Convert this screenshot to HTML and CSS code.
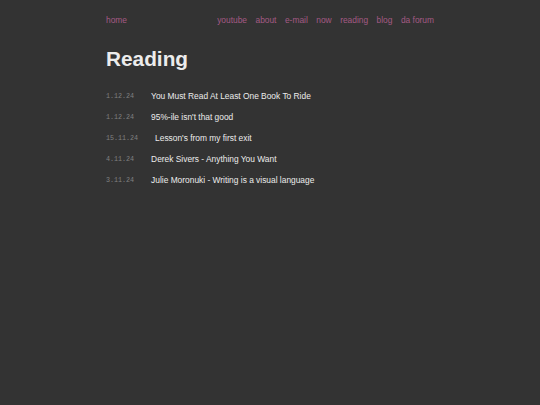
FILE: index.html
```html
<!DOCTYPE html>
<html>
<head>
<meta charset="utf-8">
<link rel="stylesheet" href="styles.css">
</head>
<body>
<div class="page">
  <nav class="nav">
    <a href="#" class="home">home</a>
    <div class="links">
      <a href="#">youtube</a>
      <a href="#">about</a>
      <a href="#">e-mail</a>
      <a href="#">now</a>
      <a href="#">reading</a>
      <a href="#">blog</a>
      <a href="#">da forum</a>
    </div>
  </nav>
  <h1 class="title">Reading</h1>
  <ul class="list">
    <li class="item"><span class="date">1.12.24</span><a href="#" class="post">You Must Read At Least One Book To Ride</a></li>
    <li class="item"><span class="date">1.12.24</span><a href="#" class="post">95%-ile isn't that good</a></li>
    <li class="item"><span class="date">15.11.24</span><a href="#" class="post">Lesson's from my first exit</a></li>
    <li class="item"><span class="date">4.11.24</span><a href="#" class="post">Derek Sivers - Anything You Want</a></li>
    <li class="item"><span class="date">3.11.24</span><a href="#" class="post">Julie Moronuki - Writing is a visual language</a></li>
  </ul>
</div>
</body>
</html>
```
FILE: styles.css
```css
html, body {
  margin: 0;
  padding: 0;
  background: #333333;
  height: 100%;
}
body {
  font-family: "Liberation Sans", Arial, sans-serif;
  color: #e6e6e6;
}
.page {
  width: 328px;
  margin: 0 auto;
  padding-top: 14px;
}
a {
  text-decoration: none;
}
.nav {
  display: flex;
  justify-content: space-between;
  font-size: 8.4px;
  line-height: 12px;
}
.nav a {
  color: #a45a84;
}
.links {
  display: flex;
  gap: 8.5px;
}
.title {
  font-size: 20.8px;
  font-weight: bold;
  color: #ececec;
  margin: 20px 0 0 0;
  line-height: 26px;
}
.list {
  list-style: none;
  margin: 18px 0 0 0;
  padding: 0;
}
.item {
  font-size: 8.4px;
  line-height: 12px;
  height: 21px;
}
.date {
  font-family: "Liberation Mono", "Courier New", monospace;
  font-size: 6.7px;
  color: #808080;
  margin-right: 17px;
  vertical-align: 1px;
}
.post {
  color: #ececec;
}
```
